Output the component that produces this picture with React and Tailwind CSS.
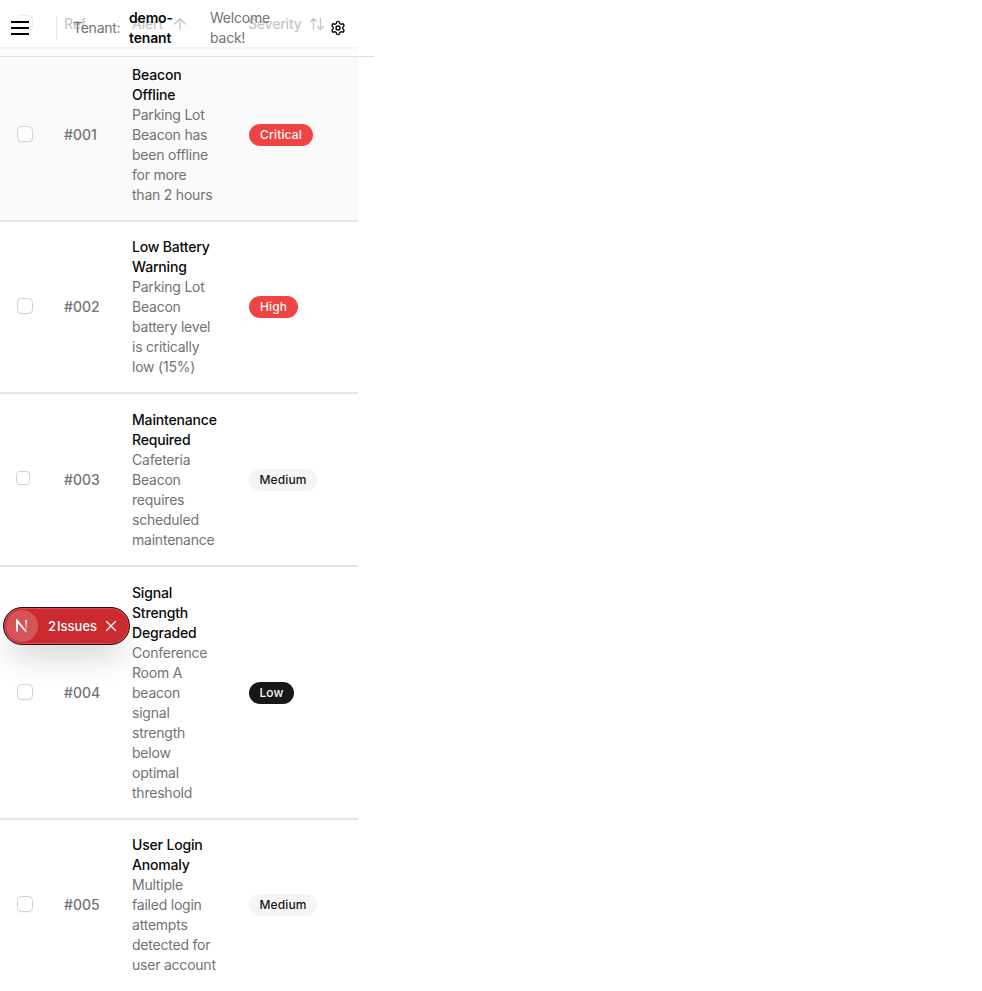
import React from 'react';
import { ArrowUp, Settings, X } from 'lucide-react';

const critical = 'bg-[#ef4444] text-[#fafafa]';
const medium = 'bg-[#f5f5f5] text-[#171717]';
const low = 'bg-[#171717] text-[#fafafa]';

const rows = [
  { id: '#001', title: ['Beacon', 'Offline'], text: ['Parking Lot', 'Beacon has', 'been offline', 'for more', 'than 2 hours'], level: 'Critical', tone: critical, width: 'w-[64px]', box: 'h-[173px] pt-[16px] bg-[#fafafa]' },
  { id: '#002', title: ['Low Battery', 'Warning'], text: ['Parking Lot', 'Beacon', 'battery level', 'is critically', 'low (15%)'], level: 'High', tone: critical, width: 'w-[49px]', box: 'h-[172px] pt-[15px]' },
  { id: '#003', title: ['Maintenance', 'Required'], text: ['Cafeteria', 'Beacon', 'requires', 'scheduled', 'maintenance'], level: 'Medium', tone: medium, width: 'w-[68px]', box: 'h-[173px] pt-[16px]', small: true },
  { id: '#004', title: ['Signal', 'Strength', 'Degraded'], text: ['Conference', 'Room A', 'beacon', 'signal', 'strength', 'below', 'optimal', 'threshold'], level: 'Low', tone: low, width: 'w-[45px]', box: 'h-[253px] pt-[16px]' },
  { id: '#005', title: ['User Login', 'Anomaly'], text: ['Multiple', 'failed login', 'attempts', 'detected for', 'user account'], level: 'Medium', tone: medium, width: 'w-[68px]', box: 'h-[173px] pt-[15px]' },
];

function Check({ small }) {
  return (
    <span
      className={
        small
          ? 'ml-[16px] mr-[34px] h-[14px] w-[14px] shrink-0 -translate-y-[2px] rounded-[3.5px] border border-[#d0d0d0] bg-white'
          : 'ml-[17px] mr-[31px] h-4 w-4 shrink-0 -translate-y-[1px] rounded-[4.5px] border border-[#d0d0d0] bg-white shadow-[0_1px_1px_rgba(0,0,0,0.04)]'
      }
    />
  );
}

function SortIcon() {
  return (
    <svg className="ml-[7px] h-[14px] w-[16px]" viewBox="0 0 16 14" fill="none" stroke="currentColor" strokeWidth="1.4" strokeLinecap="round" strokeLinejoin="round">
      <path d="M4.5 12V1.5M1.5 4.5l3-3 3 3M11.5 1.5v11M8.5 9.5l3 3 3-3" />
    </svg>
  );
}

function TableHeader() {
  return (
    <div className="flex h-[49px] items-center border-b-2 border-[#e5e5e5] font-medium tracking-[-0.2px] text-[#737373]">
      <Check />
      <span className="w-[68px]">Ref</span>
      <span className="flex w-[116px] items-center">
        Alert
        <ArrowUp className="ml-[8px] h-[18px] w-[18px]" strokeWidth={1.8} />
      </span>
      <span className="flex items-center">
        Severity
        <SortIcon />
      </span>
    </div>
  );
}

function AlertRow({ row }) {
  return (
    <div className={`flex items-start border-b-2 border-[#e5e5e5] ${row.box}`}>
      <div className="flex w-[132px] shrink-0 items-center self-stretch pb-[16px]">
        <Check small={row.small} />
        <span className="font-medium text-[#737373]">{row.id}</span>
      </div>
      <div className="w-[117px] shrink-0 whitespace-nowrap">
        {row.title.map((t) => <div key={t} className="font-medium tracking-[-0.17px] text-[#0a0a0a]">{t}</div>)}
        {row.text.map((t) => <div key={t} className="tracking-[-0.22px] text-[#737373]">{t}</div>)}
      </div>
      <div className="flex items-center self-stretch pb-[16px]">
        <span className={`flex h-[22px] items-center justify-center rounded-full text-[12px] font-medium leading-4 tracking-[0.15px] ${row.width} ${row.tone}`}>
          {row.level}
        </span>
      </div>
    </div>
  );
}

function TopBar() {
  return (
    <header className="absolute left-0 top-0 flex h-[57px] w-[374px] items-center border-b border-[#dedede] bg-white/60">
      <svg className="ml-[11px] h-[16px] w-[18px] shrink-0 text-black" viewBox="0 0 18 16" fill="none" stroke="currentColor" strokeWidth="2">
        <path d="M0 2h18M0 8h18M0 14h18" />
      </svg>
      <span className="ml-[27px] h-6 w-px shrink-0 bg-[#e5e5e5]" />
      <span className="ml-[16px] w-[56px] shrink-0 tracking-[-0.25px] text-[#737373]">Tenant:</span>
      <span className="w-[81px] shrink-0 font-semibold tracking-[-0.17px] text-[#0a0a0a]">demo-<br />tenant</span>
      <span className="w-[120px] shrink-0 tracking-[-0.22px] text-[#737373]">Welcome<br />back!</span>
      <Settings className="h-[16px] w-[16px] shrink-0 text-[#0a0a0a]" strokeWidth={2.1} />
    </header>
  );
}

function IssuesPill() {
  return (
    <div className="absolute left-[3px] top-[607px] flex h-[38px] w-[127px] items-center rounded-full border border-[#171717] bg-[#ca2a30] text-white shadow-[inset_0_0_0_1px_#e5484d,0_16px_32px_-8px_rgba(0,0,0,0.24)]">
      <span className="ml-[2px] flex h-[32px] w-[32px] shrink-0 items-center justify-center rounded-full bg-white/20">
        <svg className="h-[14px] w-[14px]" viewBox="0 0 14 14" fill="none">
          <defs>
            <linearGradient id="right-stem" x1="0" y1="1" x2="0" y2="13" gradientUnits="userSpaceOnUse">
              <stop stopColor="white" />
              <stop offset="0.9" stopColor="white" stopOpacity="0" />
            </linearGradient>
            <linearGradient id="diagonal" x1="2" y1="1" x2="12" y2="14" gradientUnits="userSpaceOnUse">
              <stop offset="0.7" stopColor="white" />
              <stop offset="1" stopColor="white" stopOpacity="0.4" />
            </linearGradient>
          </defs>
          <path d="M2 12.5V1.5L11.5 13.2" stroke="url(#diagonal)" strokeWidth="1.8" />
          <path d="M11.2 1v12h.01" stroke="url(#right-stem)" strokeWidth="1.7" />
        </svg>
      </span>
      <span className="ml-[10px] flex w-[53px] gap-[1px] text-[13px] font-medium">
        <span>2</span><span>Issues</span>
      </span>
      <X className="ml-[1px] h-[18px] w-[18px] shrink-0" strokeWidth={1.7} />
    </div>
  );
}

export default function App() {
  return (
    <div className="relative h-[991px] w-[982px] overflow-hidden bg-white font-['Inter','Liberation_Sans',sans-serif] text-[14px] leading-5">
      <main className="w-[358px]">
        <TableHeader />
        {rows.map((row) => <AlertRow key={row.id} row={row} />)}
      </main>
      <TopBar />
      <IssuesPill />
    </div>
  );
}
